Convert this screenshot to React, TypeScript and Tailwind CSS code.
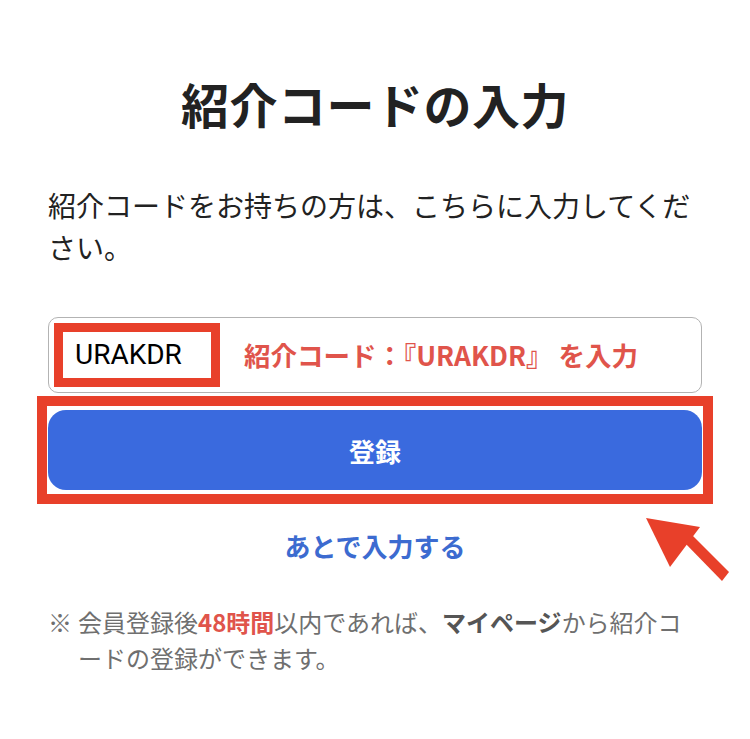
import React from "react";

const RED = "border-[#e8402a]";

function Arrow() {
  return (
    <svg
      className="absolute left-0 top-0 pointer-events-none"
      width={750}
      height={739}
      viewBox="0 0 750 739"
    >
      <polygon points="646,518 700,527 670,567" fill="#e8402a" />
      <polygon points="683,541 692,535 729,572 722,581" fill="#e8402a" />
    </svg>
  );
}

export default function App() {
  return (
    <div className="relative w-[750px] h-[739px] overflow-hidden bg-white font-['Noto_Sans_CJK_JP','Noto_Sans',sans-serif] text-[#222]">
      <div className="flex flex-col px-[48px] pt-[67px]">
        <h1 className="text-center text-[48px] leading-[72px] font-bold tracking-[0.5px]">
          紹介コードの入力
        </h1>

        <p className="mt-[45px] text-[28px] leading-[42px]">
          紹介コードをお持ちの方は、こちらに入力してください。
        </p>

        {/* code input */}
        <div className="mt-[49px] flex h-[76px] items-center rounded-[10px] border-[1.5px] border-[#b3b3b3]">
          <div className={`ml-[5px] flex h-[64px] w-[166px] items-center border-[9px] ${RED} bg-white pl-[12px]`}>
            <span className="font-['Roboto',sans-serif] text-[28px] text-black">URAKDR</span>
          </div>
          <span className="ml-[24px] text-[26.5px] font-bold text-[#e0544b] whitespace-nowrap">
            紹介コード：『URAKDR』 を入力
          </span>
        </div>

        {/* register button */}
        <div className={`mt-[3px] -mx-[11px] border-[10px] ${RED} px-[1px] py-[4px]`}>
          <button className="flex h-[80px] w-full items-center justify-center rounded-[18px] bg-[#3a6ade] text-[26px] font-bold text-white">
            登録
          </button>
        </div>

        <a className="mt-[24px] text-center text-[26px] leading-[36px] font-bold text-[#3c6bd0]">
          あとで入力する
        </a>

        <div className="mt-[40px] flex text-[24px] leading-[36px] text-[#6f6f6f]">
          <span className="w-[30px] shrink-0">※</span>
          <p className="flex-1">
            会員登録後<span className="font-bold text-[#e0544b]">48時間</span>以内であれば、
            <span className="font-bold text-[#555]">マイページ</span>から紹介コードの登録ができます。
          </p>
        </div>
      </div>
      <Arrow />
    </div>
  );
}
